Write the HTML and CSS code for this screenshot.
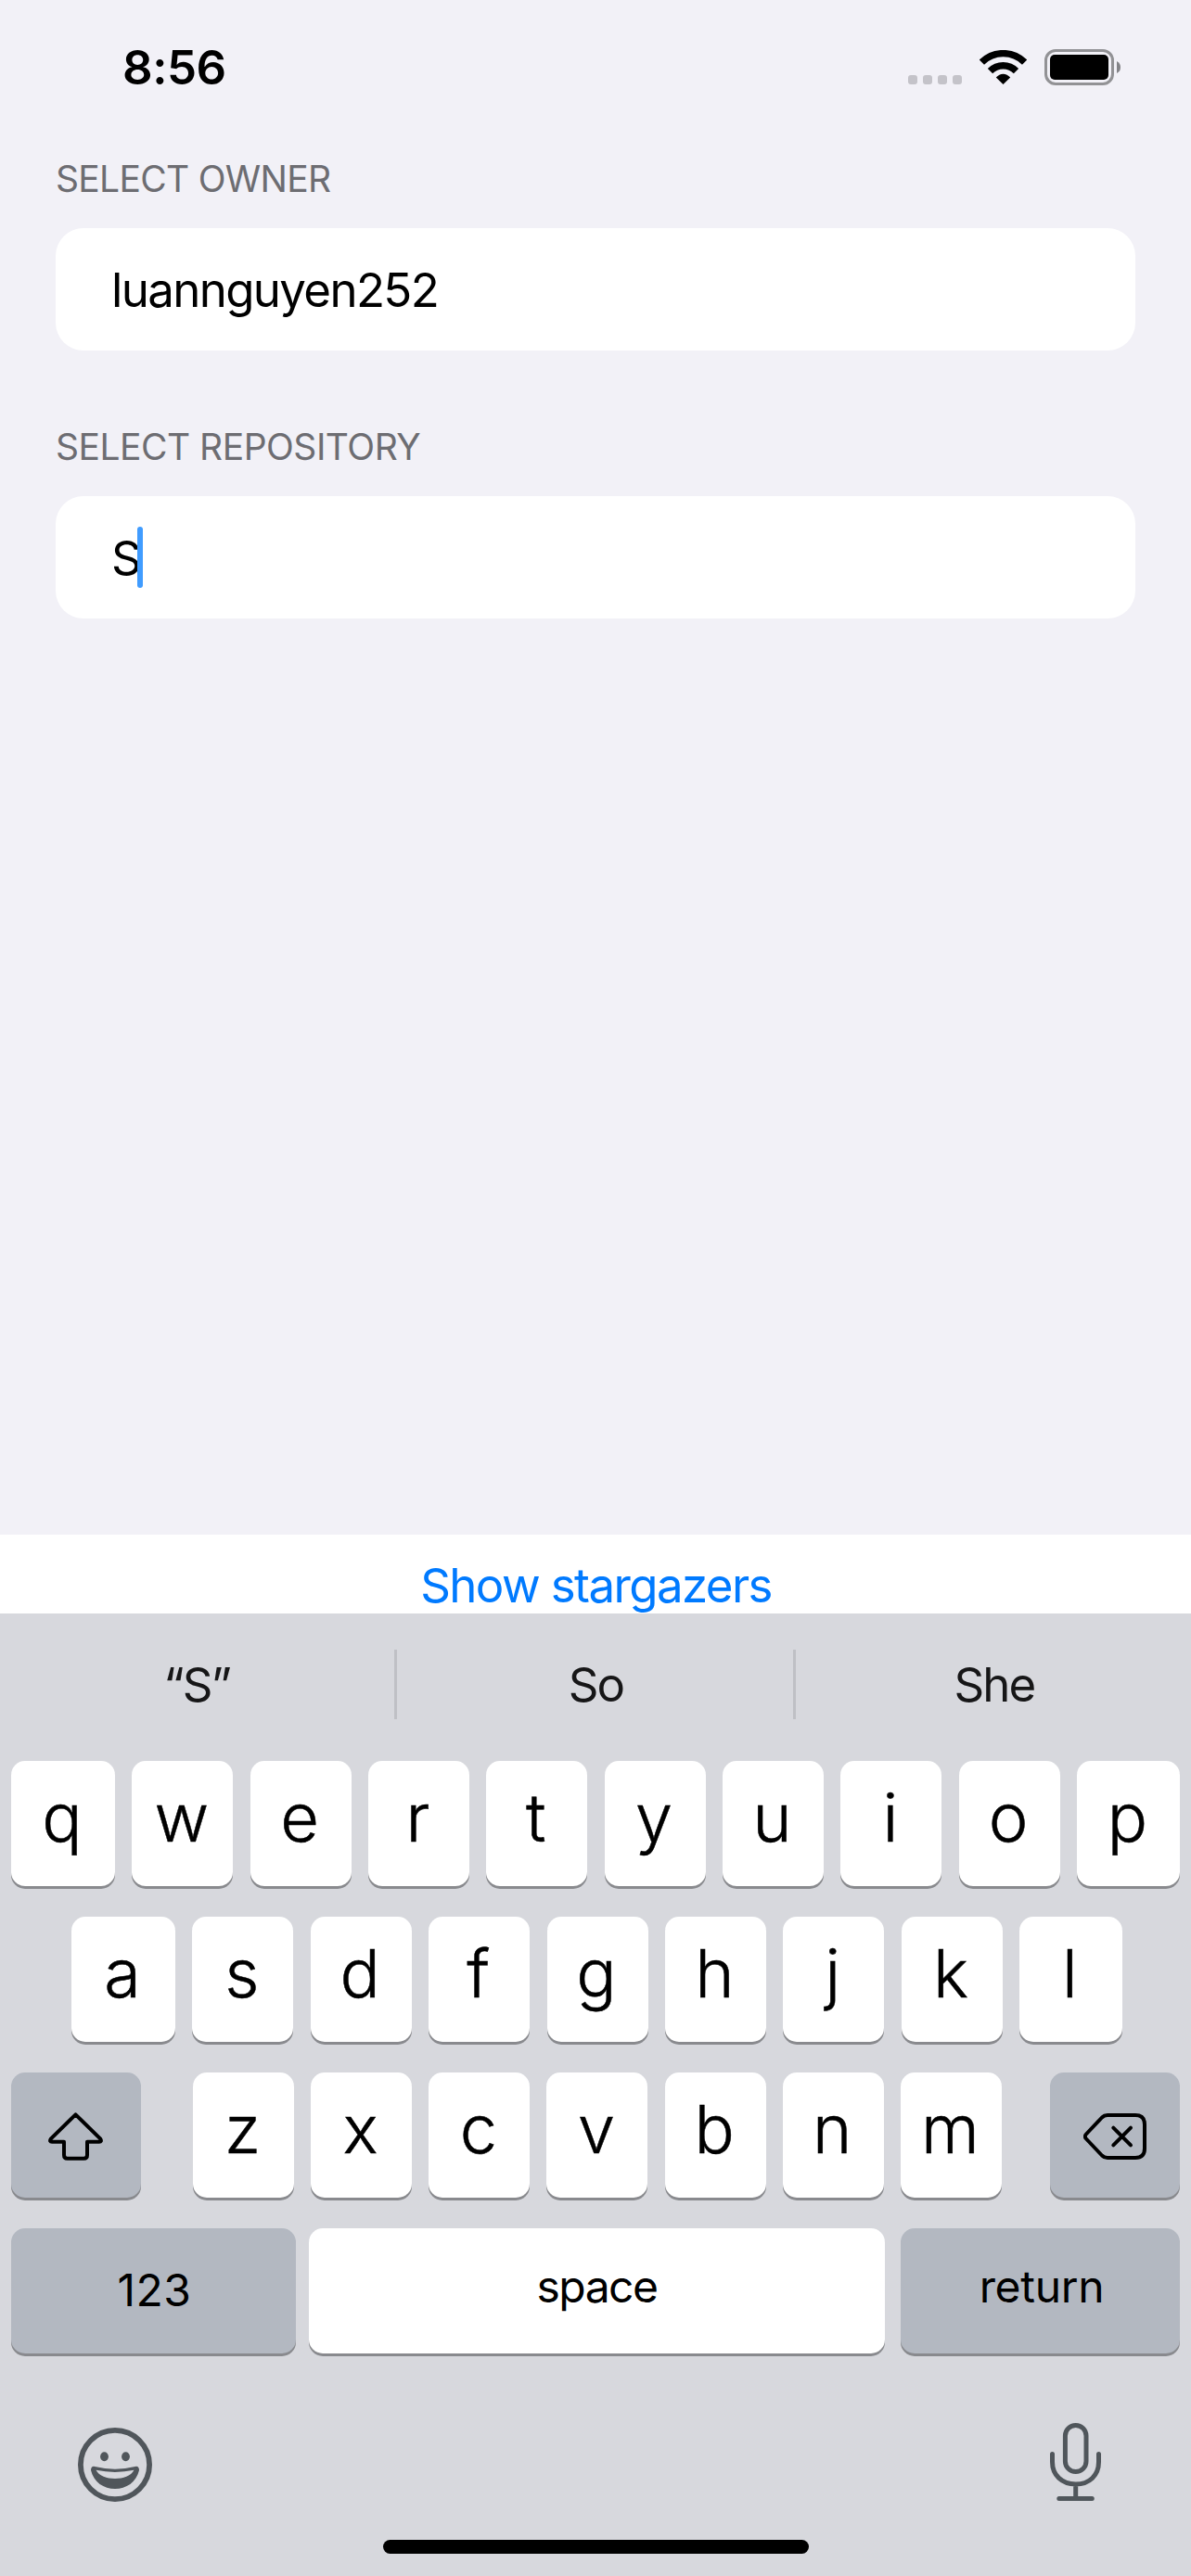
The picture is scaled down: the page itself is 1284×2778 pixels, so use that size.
FILE: index.html
```html
<!DOCTYPE html>
<html lang="en">
<head>
<meta charset="utf-8">
<title>Stargazers</title>
<link rel="stylesheet" href="styles.css">
</head>
<body>
<div class="screen">
  <header class="status">
    <span class="clock">8:56</span>
    <div class="indicators">
      <div class="signal"><i></i><i></i><i></i><i></i></div>
      <svg class="wifi" width="51" height="37" viewBox="0 0 51 37" fill="none" stroke="#000" stroke-width="7.4">
        <path d="M2.4 13.2A32.6 32.6 0 0 1 48.6 13.2"/>
        <path d="M11.5 22.7A19.6 19.6 0 0 1 39.5 22.7"/>
        <path d="M25.5 37L17.8 29.6Q21.2 25.7 25.5 25.7T33.2 29.6Z" fill="#000" stroke="none"/>
      </svg>
      <svg class="battery" width="82" height="39" viewBox="0 0 82 39">
        <rect x="1.5" y="1.5" width="72" height="36" rx="10.5" fill="none" stroke="#929295" stroke-width="3"/>
        <rect x="6" y="6" width="63" height="27" rx="5" fill="#000"/>
        <path d="M78 13Q82 15 82 19.5T78 26Z" fill="#838387"/>
      </svg>
    </div>
  </header>

  <main class="form">
    <section class="group">
      <h2 class="label owner">SELECT OWNER</h2>
      <div class="field">luannguyen252</div>
    </section>
    <section class="group">
      <h2 class="label">SELECT REPOSITORY</h2>
      <div class="field">S<span class="caret"></span></div>
    </section>
  </main>

  <div class="action">Show stargazers</div>

  <section class="keyboard">
    <div class="suggestions">
      <span class="word quoted">“S”</span><span class="divider"></span>
      <span class="word">So</span><span class="divider"></span>
      <span class="word">She</span>
    </div>

    <div class="rows">
      <div class="row">
        <span class="key first">q</span><span class="key">w</span><span class="key">e</span><span class="key">r</span><span class="key">t</span><span class="key">y</span><span class="key">u</span><span class="key">i</span><span class="key">o</span><span class="key last">p</span>
      </div>
      <div class="row home-row">
        <span class="key first">a</span><span class="key">s</span><span class="key">d</span><span class="key">f</span><span class="key">g</span><span class="key">h</span><span class="key">j</span><span class="key">k</span><span class="key last">l</span>
      </div>
      <div class="row">
        <span class="key dark icon-key shift">
          <svg width="59" height="52" viewBox="0 0 59 52" fill="none" stroke="#000" stroke-width="4" stroke-linejoin="round">
            <path d="M29.5 2.4L2.7 28.6Q1 31.7 4 31.7H17V46Q17 49.8 20.5 49.8H38.5Q42 49.8 42 46V31.7H55Q58 31.7 56.3 28.6Z"/>
          </svg>
        </span>
        <div class="letters">
          <span class="key">z</span><span class="key">x</span><span class="key">c</span><span class="key">v</span><span class="key">b</span><span class="key">n</span><span class="key">m</span>
        </div>
        <span class="key dark icon-key">
          <svg width="68" height="50" viewBox="0 0 68 50" fill="none" stroke="#000" stroke-width="4" stroke-linecap="round" stroke-linejoin="round">
            <path d="M2.5 23L20 4.5Q22.5 2 26 2H56Q66 2 66 12V38Q66 48 56 48H26Q22.5 48 20 45.5L2.5 27Q1.2 25 2.5 23Z"/>
            <path d="M32.3 15.7L51 34.3M51 15.7L32.3 34.3"/>
          </svg>
        </span>
      </div>
      <div class="row">
        <span class="key dark text-key numbers">123</span>
        <span class="key text-key space">space</span>
        <span class="key dark text-key return">return</span>
      </div>
    </div>

    <div class="tools">
      <svg width="80" height="80" viewBox="0 0 80 80" fill="#50565b">
        <circle cx="40" cy="40" r="37.1" fill="none" stroke="#50565b" stroke-width="5.8"/>
        <ellipse cx="28.5" cy="31.3" rx="4.4" ry="5"/>
        <ellipse cx="51.5" cy="31.3" rx="4.4" ry="5"/>
        <path d="M17 41.8Q40 47.5 63 41.8Q66 42 66 46C63 59 52 66 40 66C28 66 17 59 14 46Q14 42 17 41.8Z"/>
        <path d="M19.5 45.8Q40 50 60.5 45.8C57 52.5 49 55 40 55C31 55 23 52.5 19.5 45.8Z" fill="#d7d8dd"/>
      </svg>
      <svg class="mic" width="55" height="84" viewBox="0 0 55 84" fill="none" stroke="#50565b" stroke-width="5" stroke-linecap="round">
        <rect x="16.4" y="2.5" width="22.6" height="50" rx="11.3"/>
        <path d="M2.5 33.5V42C2.5 56.5 13 66 27.7 66S52.5 56.5 52.5 42V33.5M27.7 66V81.5M9.8 81.5H45.3"/>
      </svg>
    </div>
    <div class="home-bar"></div>
  </section>
</div>
</body>
</html>
```
FILE: styles.css
```css
* { box-sizing: border-box; }

body {
  margin: 0;
  background: #f2f1f7;
  color: #000;
  font-family: Inter, "Liberation Sans", sans-serif;
}

svg { display: block; flex: none; }

.screen {
  width: 1284px;
  height: 2778px;
  display: flex;
  flex-direction: column;
  overflow: hidden;
}

/* Status bar */
.status {
  height: 145px;
  display: flex;
  align-items: center;
  justify-content: space-between;
  padding: 0 76px 0 132px;
}

.clock {
  font-size: 51px;
  font-weight: 600;
  letter-spacing: -0.5px;
}

.indicators { display: flex; align-items: flex-end; }

.signal { display: flex; gap: 6px; margin-bottom: 1px; }

.signal i {
  width: 10px;
  height: 10px;
  border-radius: 3px;
  background: #c4c3c9;
}

.wifi { margin: 0 19px 1px; }

/* Form */
.form {
  flex: 1;
  display: flex;
  flex-direction: column;
  gap: 80px;
  padding: 24px 60px 0;
}

.label {
  margin: 0 0 29px 0;
  font-size: 39px;
  font-weight: 400;
  line-height: 48px;
  letter-spacing: -0.5px;
  color: #6d6d72;
}

.owner { letter-spacing: -0.7px; }

.field {
  height: 132px;
  display: flex;
  align-items: center;
  padding: 1px 60px 0;
  border-radius: 30px;
  background: #fff;
  font-size: 51px;
  letter-spacing: -1.65px;
}

.caret {
  width: 6px;
  height: 66px;
  margin: -1px 0 0 -3px;
  border-radius: 3px;
  background: #409cff;
}

.action {
  height: 85px;
  padding: 24px 0 0 1px;
  background: #fff;
  color: #007aff;
  font-size: 51px;
  line-height: 61px;
  letter-spacing: -1.6px;
  text-align: center;
}

/* Keyboard */
.keyboard {
  height: 1038px;
  background: #d7d8dd;
}

.suggestions {
  height: 153px;
  display: flex;
  align-items: center;
}

.word {
  flex: 1;
  padding-left: 2px;
  color: #161617;
  font-size: 51px;
  letter-spacing: -2px;
  text-align: center;
}

.quoted { padding: 0 1px 0 0; }

.divider {
  width: 3px;
  height: 75px;
  background: #bfc0c5;
}

.rows {
  display: flex;
  flex-direction: column;
  gap: 33px;
  padding: 6px 12px 0;
}

.row {
  display: flex;
  justify-content: space-between;
}

.home-row { padding: 0 62px 0 65px; }

.letters {
  width: 872px;
  margin-left: 4px;
  display: flex;
  justify-content: space-between;
}

.key {
  width: 109px;
  height: 135px;
  display: flex;
  align-items: center;
  justify-content: center;
  padding: 0 2px 15px 0;
  border-radius: 15px;
  background: #fff;
  box-shadow: 0 3px 0 #898a8e;
  font-size: 72px;
  font-weight: 300;
  -webkit-text-stroke: 0.5px #000;
}

.first { width: 112px; }
.last { width: 111px; }
.dark { background: #b3b8c1; }

.icon-key {
  width: 140px;
  padding: 3px 0 0;
}

.shift { padding-right: 1px; }

.text-key {
  padding: 0 0 10px;
  font-size: 48px;
  font-weight: 400;
  -webkit-text-stroke: 0;
}

.numbers {
  width: 307px;
  padding: 0 0 2px 2px;
  letter-spacing: 0.6px;
}

.space {
  width: 621px;
  margin-right: 3px;
  letter-spacing: -1.5px;
}

.return {
  width: 301px;
  padding-left: 3px;
  letter-spacing: -0.3px;
}

.tools {
  height: 160px;
  display: flex;
  align-items: flex-end;
  justify-content: space-between;
  padding: 0 97px 0 84px;
}

.mic { margin-bottom: 1px; }

.home-bar {
  width: 459px;
  height: 15px;
  margin: 41px 0 0 413px;
  border-radius: 7.5px;
  background: #000;
}
```
